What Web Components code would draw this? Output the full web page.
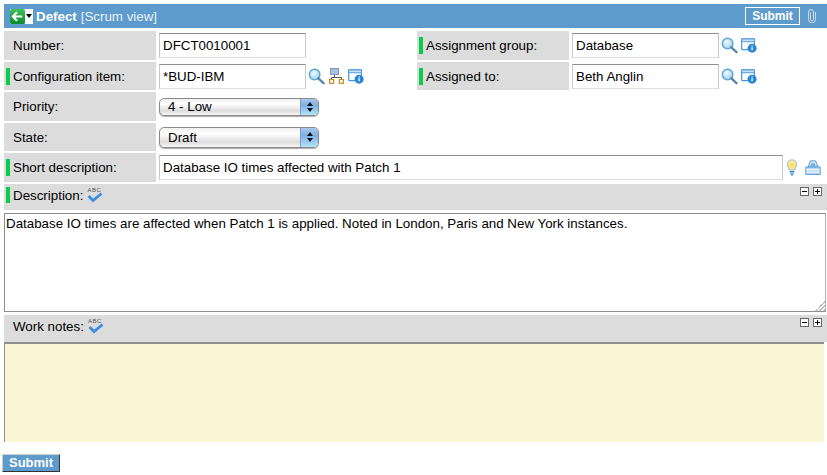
<!DOCTYPE html>
<html>
<head>
<meta charset="utf-8">
<title>Defect</title>
<style>
html, body { margin: 0; padding: 0; background: #fff; }
body { font-family: "Liberation Sans", Arial, sans-serif; font-size: 13.33px; color: #000; overflow: hidden; }
</style>
</head>
<body>
<defect-form></defect-form>
<script>
const ICONS = {
  search: `<svg width="17" height="17" viewBox="0 0 18 18"><defs><radialGradient id="g" cx=".4" cy=".35" r=".7"><stop offset="0" stop-color="#f2faff"/><stop offset="1" stop-color="#9ccdee"/></radialGradient></defs><circle cx="7" cy="7" r="5.6" fill="url(#g)" stroke="#5aa5da" stroke-width="1.500"/><path d="M11 11l5.400 5" stroke="#5b86a8" stroke-width="2.600" stroke-linecap="round"/></svg>`,
  tree: `<svg width="15" height="16" viewBox="0 0 15 16"><rect x="1.500" y=".5" width="8" height="6" fill="#a9c1e0" stroke="#7d97bb"/><path d="M5.500 7v2.500M2.500 12V9.500h10V12" fill="none" stroke="#555"/><rect x=".6" y="11.500" width="4" height="3.800" fill="#fff" stroke="#c98f1e" stroke-width="1.200"/><rect x="10.400" y="11.500" width="4" height="3.800" fill="#fff" stroke="#c98f1e" stroke-width="1.200"/></svg>`,
  info: `<svg width="16" height="15" viewBox="0 0 17 16"><rect x=".7" y="1" width="13.600" height="11.500" rx="1" fill="#fff" stroke="#4a97da" stroke-width="1.300"/><rect x=".7" y="1" width="13.600" height="3" fill="#c6dff4" stroke="#4a97da" stroke-width="1"/><circle cx="11.800" cy="10.800" r="4.800" fill="#2b86d6"/><path d="M11.800 8.100v1M11.800 9.900v3.200" stroke="#fff" stroke-width="1.400"/></svg>`,
  bulb: `<svg width="12" height="17" viewBox="0 0 14 20"><defs><radialGradient id="b" cx=".5" cy=".6" r=".6"><stop offset="0" stop-color="#ffe35a"/><stop offset="1" stop-color="#fbe9a4"/></radialGradient></defs><path d="M7 1a5.600 5.600 0 0 0-5.600 5.600c0 2.600 2 3.700 2.600 6.400h6c.6-2.700 2.600-3.800 2.600-6.400A5.600 5.600 0 0 0 7 1z" fill="url(#b)" stroke="#8fc2e8" stroke-width="1.200"/><path d="M4.300 14.700h5.400M4.500 16.500h5" stroke="#2c7fc4" stroke-width="1.400"/><path d="M5.500 18.700h3" stroke="#2c7fc4" stroke-width="1.500"/></svg>`,
  book: `<svg width="16" height="15" viewBox="0 0 18 17"><path d="M3.500 8L6 1h6l2.500 7z" fill="#dbeaf7" stroke="#3f8fd6"/><path d="M6.500 7l1-2.800h3l1 2.800" fill="#7fb5e0" stroke="#3f8fd6" stroke-width=".7"/><path d="M.8 8h16.400v8.300H.8z" fill="#bcd9f2" stroke="#3f8fd6"/><path d="M1 11h16M1 13.700h16" stroke="#fff"/></svg>`,
  spell: `<span style="position:relative;display:inline-block;width:17px;height:15px"><span style="position:absolute;left:1px;top:-1px;font:6px 'Liberation Sans',sans-serif;letter-spacing:.5px;color:#555;line-height:7px">ABC</span><svg style="position:absolute;left:0;top:0" width="17" height="15" viewBox="0 0 17 15"><path d="M2.500 8l4.500 4.500L15.500 5.500" fill="none" stroke="#3d8fde" stroke-width="2.800"/></svg></span>`,
  clip: `<svg width="10" height="14" viewBox="0 0 10 14"><path d="M3.500 3.500v7a1.500 1.500 0 0 0 3 0V3a2.500 2.500 0 0 0-5 0v7.500a3.500 3.500 0 0 0 7 0V3" fill="none" stroke="#cfdbe5" stroke-width="1"/></svg>`,
  back: `<svg width="15" height="15" viewBox="0 0 16 16"><defs><linearGradient id="k" x1="0" y1="0" x2="0" y2="1"><stop offset="0" stop-color="#3fc05a"/><stop offset="1" stop-color="#0a8a2c"/></linearGradient></defs><rect width="16" height="16" rx="2" fill="url(#k)"/><path d="M3 8h10M7.500 3.500L3 8l4.500 4.500" fill="none" stroke="#fff" stroke-width="2.200"/></svg>`
}

class SnIcon extends HTMLElement {
  constructor() {
    super()
    this.attachShadow({ mode: 'open' })
  }
  connectedCallback() {
    this.shadowRoot.innerHTML = `<style>:host{display:inline-flex;align-items:center;line-height:0}</style>${ICONS[this.getAttribute('name')]}`
  }
}

class SnHeader extends HTMLElement {
  constructor() {
    super()
    this.attachShadow({ mode: 'open' })
    this.shadowRoot.innerHTML = `
    <style>
    :host { display: flex; align-items: center; height: 24px; background: #5c9bcb; color: #fff; padding-left: 6px; font-size: 13.33px; }
    .back { display: flex; align-items: center; background: #fff; height: 15px; margin-right: 3px; }
    .arrow { width: 0; height: 0; border: 3px solid transparent; border-top: 4px solid #000; border-bottom: 0; margin: 0 1px; }
    b { margin-right: 4px; }
    span.view { flex: 1; color: #eaf2f9; }
    .submit { border: 1px solid #fff; font-weight: bold; font-size: 12px; height: 16px; line-height: 16px; width: 53px; text-align: center; margin-right: 7px; }
    sn-icon { margin-right: 10px; }
    </style>
    <div class="back"><sn-icon name="back" style="margin:0"></sn-icon><div class="arrow"></div></div>
    <b>Defect</b><span class="view">[Scrum view]</span>
    <div class="submit">Submit</div>
    <sn-icon name="clip"></sn-icon>`
  }
}

class SnLabel extends HTMLElement {
  constructor() {
    super()
    this.attachShadow({ mode: 'open' })
    this.shadowRoot.innerHTML = `
    <style>
    :host { display: flex; align-items: center; background: #dcdcdc; padding-left: 9px; position: relative; }
    :host([mandatory])::before { content: ''; position: absolute; left: 2px; top: 6px; width: 4px; height: 17px; background: #0ccc4c; }
    </style>
    <slot></slot>`
  }
}

class SnInput extends HTMLElement {
  constructor() {
    super()
    this.attachShadow({ mode: 'open' })
    this.shadowRoot.innerHTML = `
    <style>
    :host { display: flex; align-items: center; height: 25px; box-sizing: border-box; border: 1px solid #c8c8c8; border-top: 1px solid #8f8f8f; border-bottom-color: #dedede; padding: 0 3px; background: #fff; white-space: nowrap; overflow: hidden; }
    </style>
    <slot></slot>`
  }
}

class SnSelect extends HTMLElement {
  constructor() {
    super()
    this.attachShadow({ mode: 'open' })
    this.shadowRoot.innerHTML = `
    <style>
    :host { display: flex; width: 160px; box-sizing: border-box; border: 1px solid #8a8a8a; border-radius: 5px; overflow: hidden; background: linear-gradient(#f0f0f0, #fff 30%, #dcdcdc 75%, #f8f8f8); box-shadow: 0 1px 1px #aaa; }
    .txt { flex: 1; padding-left: 8px; display: flex; align-items: center; }
    .btn { width: 17px; background: linear-gradient(#a9c8ea, #7db1e4 40%, #b5e2f8); display: flex; flex-direction: column; align-items: center; justify-content: center; gap: 2px; border-left: 1px solid #7c9cc0; }
    .up, .down { width: 0; height: 0; border-left: 3px solid transparent; border-right: 3px solid transparent; }
    .up { border-bottom: 4px solid #111; }
    .down { border-top: 4px solid #111; }
    </style>
    <div class="txt"><slot></slot></div>
    <div class="btn"><div class="up"></div><div class="down"></div></div>`
  }
}

class SnSectionBar extends HTMLElement {
  constructor() {
    super()
    this.attachShadow({ mode: 'open' })
    this.shadowRoot.innerHTML = `
    <style>
    :host { display: flex; background: #dcdcdc; padding-left: 9px; position: relative; }
    :host([mandatory])::before { content: ''; position: absolute; left: 2px; top: 3px; width: 4px; height: 16px; background: #0ccc4c; }
    .lab { display: flex; align-items: flex-start; gap: 3px; padding-top: 4px; flex: 1; }
    .tools { display: flex; gap: 4px; padding: 3px 5px 0 0; }
    .tools div { width: 7px; height: 7px; border: 1px solid #666; background: #fff; position: relative; }
    .tools div::before { content: ''; position: absolute; left: 1px; right: 1px; top: 3px; height: 1px; background: #000; }
    .tools div.plus::after { content: ''; position: absolute; top: 1px; bottom: 1px; left: 3px; width: 1px; background: #000; }
    </style>
    <div class="lab"><slot></slot><sn-icon name="spell"></sn-icon></div>
    <div class="tools"><div></div><div class="plus"></div></div>`
  }
}

class DefectForm extends HTMLElement {
  constructor() {
    super()
    this.attachShadow({ mode: 'open' })
    this.shadowRoot.innerHTML = `
    <style>
    :host { display: block; padding: 4px 0 0 4px; }
    sn-header { margin-bottom: 3px; }
    .grid { display: grid; grid-template-columns: 152px 261px 152px 1fr; grid-template-rows: 29px 28px 29px 28px 29px; row-gap: 2px; margin-bottom: 2px; }
    .val { display: flex; align-items: center; padding-left: 3px; }
    .val sn-input { width: 147px; flex: none; margin-right: 2px; }
    .val sn-icon { margin-right: 3px; }
    .val sn-icon[name=tree] { margin: 0 4px 0 1px; }
    .wide { grid-column: 2 / 5; }
    .wide sn-input { width: 624px; margin-right: 3px; }
    .wide sn-icon[name=bulb] { margin-right: 7px; }
    .box { box-sizing: border-box; border: 1px solid #8f8f8f; border-right-color: #b0b0b0; height: 99px; margin: 3px 1px 3px 0; padding: 2px 1px; position: relative; }
    .grip { position: absolute; right: 0; bottom: 0; width: 10px; height: 10px; background: linear-gradient(135deg, transparent 50%, #bbb 50%, #bbb 58%, transparent 58%, transparent 68%, #bbb 68%, #bbb 76%, transparent 76%, transparent 86%, #bbb 86%); }
    .notes { height: 100px; margin-right: 3px; background: #fbf6d6; border-top: 2px solid #8f8f8f; border-left: 1px solid #8f8f8f; box-sizing: border-box; }
    .submit { margin: 12px 0 0 -2px; width: 58px; height: 18px; box-sizing: border-box; background: #5c9bcb; color: #fff; font-weight: bold; font-size: 13px; line-height: 15px; text-align: center; border: 1px solid; border-color: #ccc #333 #333 #ccc; }
    </style>
    <sn-header></sn-header>
    <div class="grid">
      <sn-label>Number:</sn-label>
      <div class="val"><sn-input>DFCT0010001</sn-input></div>
      <sn-label mandatory>Assignment group:</sn-label>
      <div class="val"><sn-input>Database</sn-input><sn-icon name="search"></sn-icon><sn-icon name="info"></sn-icon></div>

      <sn-label mandatory>Configuration item:</sn-label>
      <div class="val"><sn-input>*BUD-IBM</sn-input><sn-icon name="search"></sn-icon><sn-icon name="tree"></sn-icon><sn-icon name="info"></sn-icon></div>
      <sn-label mandatory>Assigned to:</sn-label>
      <div class="val"><sn-input>Beth Anglin</sn-input><sn-icon name="search"></sn-icon><sn-icon name="info"></sn-icon></div>

      <sn-label>Priority:</sn-label>
      <div class="val"><sn-select style="height:18px">4 - Low</sn-select></div>
      <div></div><div></div>

      <sn-label>State:</sn-label>
      <div class="val"><sn-select style="height:21px">Draft</sn-select></div>
      <div></div><div></div>

      <sn-label mandatory>Short description:</sn-label>
      <div class="val wide"><sn-input>Database IO times affected with Patch 1</sn-input><sn-icon name="bulb"></sn-icon><sn-icon name="book"></sn-icon></div>
    </div>
    <sn-section-bar mandatory style="height:26px">Description:</sn-section-bar>
    <div class="box">Database IO times are affected when Patch 1 is applied. Noted in London, Paris and New York instances.<div class="grip"></div></div>
    <sn-section-bar style="height:27px">Work notes:</sn-section-bar>
    <div class="notes"></div>
    <div class="submit">Submit</div>`
  }
}

customElements.define('sn-icon', SnIcon)
customElements.define('sn-header', SnHeader)
customElements.define('sn-label', SnLabel)
customElements.define('sn-input', SnInput)
customElements.define('sn-select', SnSelect)
customElements.define('sn-section-bar', SnSectionBar)
customElements.define('defect-form', DefectForm)
</script>
</body>
</html>
